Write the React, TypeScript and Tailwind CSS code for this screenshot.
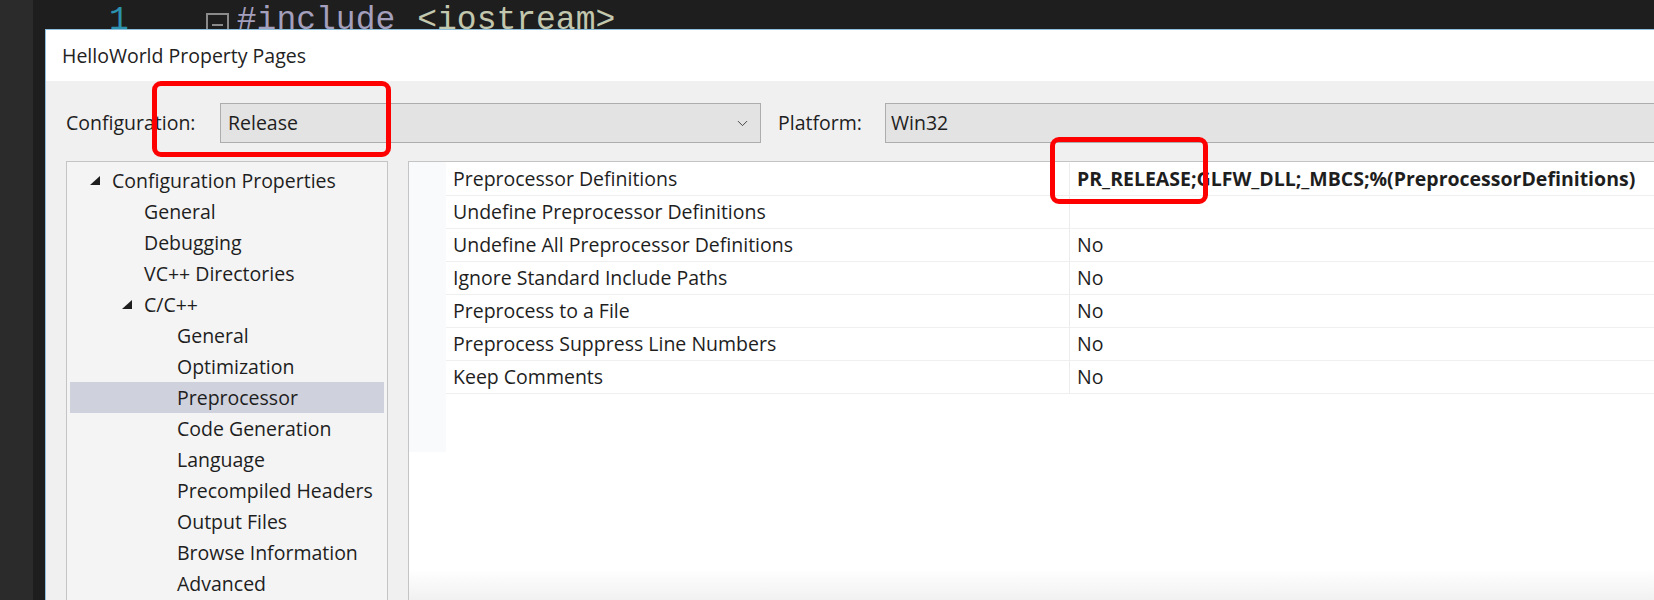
import { ChevronDown } from "lucide-react";

const tree = [
  { label: "Configuration Properties", level: 0, open: true },
  { label: "General", level: 1 },
  { label: "Debugging", level: 1 },
  { label: "VC++ Directories", level: 1 },
  { label: "C/C++", level: 1, open: true },
  { label: "General", level: 2 },
  { label: "Optimization", level: 2 },
  { label: "Preprocessor", level: 2, selected: true },
  { label: "Code Generation", level: 2 },
  { label: "Language", level: 2 },
  { label: "Precompiled Headers", level: 2 },
  { label: "Output Files", level: 2 },
  { label: "Browse Information", level: 2 },
  { label: "Advanced", level: 2 },
];

const indent = ["pl-[20px]", "pl-[52px]", "pl-[85px]"];

const props = [
  { name: "Preprocessor Definitions", value: "PR_RELEASE;GLFW_DLL;_MBCS;%(PreprocessorDefinitions)", bold: true },
  { name: "Undefine Preprocessor Definitions", value: "" },
  { name: "Undefine All Preprocessor Definitions", value: "No" },
  { name: "Ignore Standard Include Paths", value: "No" },
  { name: "Preprocess to a File", value: "No" },
  { name: "Preprocess Suppress Line Numbers", value: "No" },
  { name: "Keep Comments", value: "No" },
];

function Expander() {
  return (
    <svg width="10" height="9" viewBox="0 0 10 9">
      <polygon points="10,0 10,9 0,9" fill="#1e1e1e" />
    </svg>
  );
}

export default function App() {
  return (
    <div className="w-[1654px] h-[600px] relative overflow-hidden flex bg-[#1e1e1e] font-['Open_Sans','Segoe_UI',sans-serif] text-[#1e1e1e]">
      {/* left editor strip */}
      <div className="w-[33px] h-full bg-[#2b2b2b] shrink-0" />

      <div className="flex-1 flex flex-col min-w-0">
        {/* code line peeking above the dialog */}
        <div className="h-[29px] overflow-hidden flex items-start font-['Liberation_Mono',monospace] text-[33px] leading-[33px] pt-[4px]">
          <span className="ml-[76px] text-[#2b91af]">1</span>
          <span className="ml-[77px] mt-[9px] w-[23px] h-[23px] border-2 border-[#8a8a8a] flex items-center justify-center">
            <span className="w-[11px] h-[2px] bg-[#8a8a8a]" />
          </span>
          <span className="ml-[8px] text-[#a39fbd]">#include</span>
          <span className="ml-[22px] text-[#c2c7ae]">&lt;iostream&gt;</span>
        </div>

        <div className="flex-1 flex min-h-0">
          <div className="w-[12px] shrink-0" />
          {/* dialog */}
          <div className="flex-1 flex flex-col border-l border-t border-[#8ebfdc] bg-[#f0f0f0] min-w-0 text-[19.5px]">
            <div className="h-[51px] bg-white flex items-center pl-[16px] text-[#222]">HelloWorld Property Pages</div>

            <div className="flex items-center pt-[22px] pl-[20px]">
              <span className="w-[154px] shrink-0">Configuration:</span>
              <div className="w-[541px] h-[40px] shrink-0 border border-[#adadad] bg-[#e3e3e3] flex items-center justify-between pl-[7px] pr-[9px]">
                <span>Release</span>
                <ChevronDown size={17} strokeWidth={1.4} color="#444" />
              </div>
              <span className="ml-[17px] w-[107px] shrink-0">Platform:</span>
              <div className="flex-1 h-[40px] border border-r-0 border-[#adadad] bg-[#e3e3e3] flex items-center pl-[5px]">
                <span>Win32</span>
              </div>
            </div>

            <div className="flex-1 flex gap-[20px] pt-[18px] pl-[20px] min-h-0">
              {/* tree */}
              <div className="w-[322px] shrink-0 border border-b-0 border-[#c4c4c4] bg-[#f4f4f4] px-[3px] pt-[3px]">
                {tree.map((t, i) => (
                  <div
                    key={i}
                    className={`h-[31px] flex items-center ${indent[t.level]} ${t.selected ? "bg-[#cfd1dc]" : ""}`}
                  >
                    <span className="w-[22px] shrink-0 flex items-center">{t.open ? <Expander /> : null}</span>
                    <span className="whitespace-nowrap">{t.label}</span>
                  </div>
                ))}
              </div>

              {/* property grid */}
              <div className="flex-1 flex border-l border-t border-[#c4c4c4] bg-linear-to-b from-white from-[93%] to-[#f1f1f1] min-w-0">
                <div className="w-[37px] h-[290px] shrink-0 bg-[#f9fafc]" />
                <div className="flex-1 flex flex-col pt-[1px] min-w-0">
                  {props.map((p, i) => (
                    <div key={i} className="h-[33px] flex border-b border-[#efefef] bg-white">
                      <div className="w-[624px] shrink-0 border-r border-[#ececec] flex items-center pl-[7px] whitespace-nowrap">
                        {p.name}
                      </div>
                      <div className={`flex-1 flex items-center pl-[7px] whitespace-nowrap ${p.bold ? "font-bold" : ""}`}>
                        {p.value}
                      </div>
                    </div>
                  ))}
                </div>
              </div>
            </div>
          </div>
        </div>
      </div>

      {/* red annotation boxes */}
      <div className="absolute left-[152px] top-[81px] w-[239px] h-[76px] border-[5px] border-[#ff0000] rounded-[9px]" />
      <div className="absolute left-[1050px] top-[137px] w-[158px] h-[67px] border-[5px] border-[#ff0000] rounded-[9px]" />
    </div>
  );
}
